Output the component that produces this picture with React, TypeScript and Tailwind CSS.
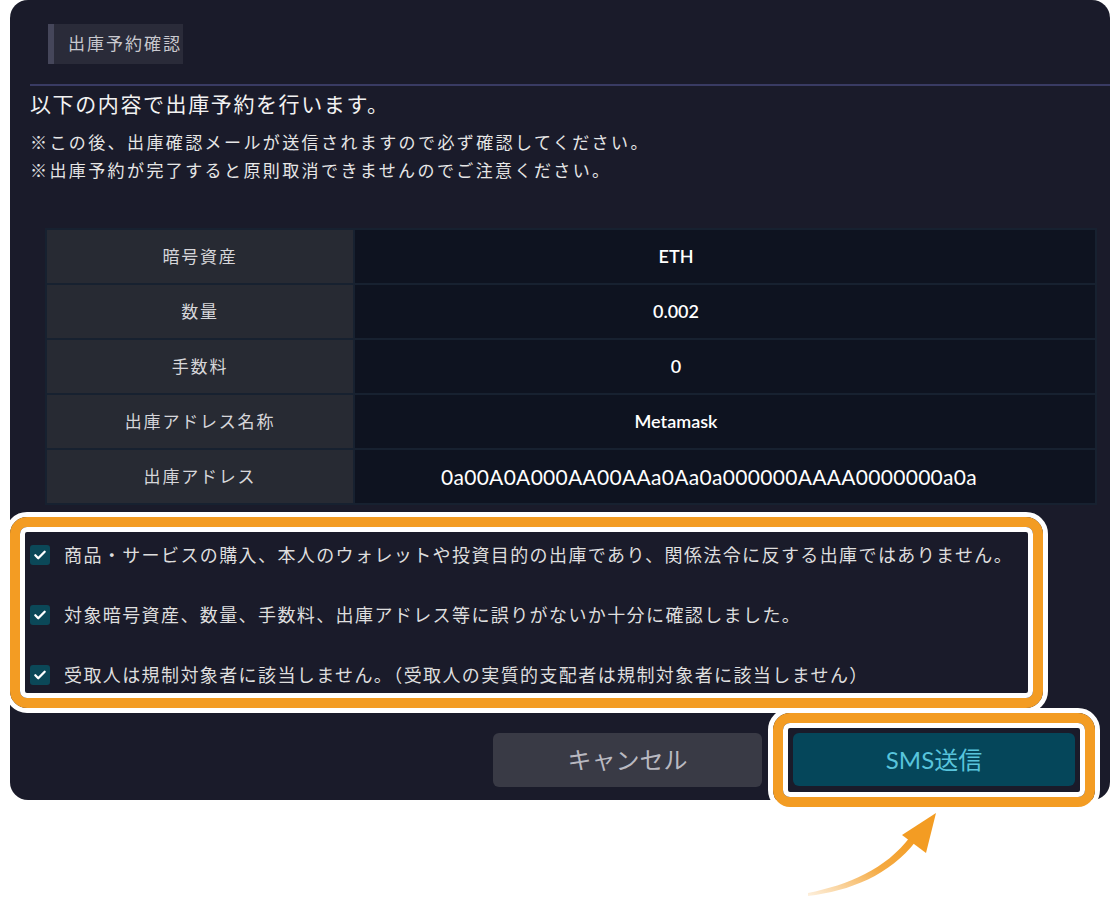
import React from 'react';

const rows = [
  { label: '暗号資産', value: 'ETH', big: false },
  { label: '数量', value: '0.002', big: false },
  { label: '手数料', value: '0', big: false },
  { label: '出庫アドレス名称', value: 'Metamask', big: false },
  { label: '出庫アドレス', value: '0a00A0A000AA00AAa0Aa0a000000AAAA0000000a0a', big: true },
];

const checks = [
  '商品・サービスの購入、本人のウォレットや投資目的の出庫であり、関係法令に反する出庫ではありません。',
  '対象暗号資産、数量、手数料、出庫アドレス等に誤りがないか十分に確認しました。',
  '受取人は規制対象者に該当しません。（受取人の実質的支配者は規制対象者に該当しません）',
];

const CheckBox = () => (
  <span className="flex h-[20px] w-[20px] shrink-0 items-center justify-center rounded-[3px] bg-[#0b4858]">
    <svg width="14" height="14" viewBox="0 0 24 24" fill="none" stroke="#ffffff" strokeWidth="4" strokeLinecap="round" strokeLinejoin="round">
      <path d="M4 12.5l5 5L20 6.5" />
    </svg>
  </span>
);

// orange highlight frame drawn over the screenshot
const Frame: React.FC<{ className: string }> = ({ className }) => (
  <div className={`absolute rounded-[22px] border-[5px] border-white ${className}`}>
    <div className="h-full w-full rounded-[17px] border-[10px] border-[#f39c23]">
      <div className="h-full w-full rounded-[7px] border-[5px] border-white" />
    </div>
  </div>
);

const App: React.FC = () => {
  return (
    <div className="relative h-[897px] w-[1110px] overflow-hidden bg-white font-['Lato','Noto_Sans_CJK_JP',sans-serif]">
      <div className="ml-[10px] h-[800px] w-[1100px] rounded-[18px] bg-[#1a1b2a] pt-[24px]">
        {/* title */}
        <div className="ml-[38px] flex h-[40px] w-fit bg-[#2a2b39]">
          <div className="w-[6px] bg-[#45465a]" />
          <span className="flex items-center pl-[14px] pr-[1px] text-[17px] tracking-[2px] text-[#c9c9cf]">出庫予約確認</span>
        </div>
        <div className="ml-[20px] mt-[20px] h-[2px] bg-[#393b63]" />

        <div className="ml-[20px] mt-[4px] text-[21px] leading-[28px] tracking-[1.6px] text-[#f2f2f2]">以下の内容で出庫予約を行います。</div>
        <div className="ml-[20px] mt-[11px] text-[17px] leading-[28px] tracking-[2.4px] text-[#e6e6e6]">
          <div>※この後、出庫確認メールが送信されますので必ず確認してください。</div>
          <div>※出庫予約が完了すると原則取消できませんのでご注意ください。</div>
        </div>

        {/* table */}
        <div className="ml-[35px] mt-[43px] flex w-[1052px] flex-col gap-[2px] bg-[#172130] p-[2px]">
          {rows.map((r) => (
            <div key={r.label} className="flex h-[53px] gap-[2px]">
              <div className="flex w-[306px] items-center justify-center bg-[#272a33] text-[17px] tracking-[1.8px] text-[#d6d6da]">{r.label}</div>
              <div
                className={`flex flex-1 items-center justify-center bg-[#0e1320] text-white ${
                  r.big ? 'pr-[32px] text-[21px] tracking-[0.3px]' : 'pr-[98px] text-[18px] font-semibold'
                }`}
              >
                {r.value}
              </div>
            </div>
          ))}
        </div>

        {/* confirmations */}
        <div className="ml-[10px] mt-[27px] flex h-[161px] w-[1008px] flex-col gap-[36px] pl-[10px] pt-[11px]">
          {checks.map((c) => (
            <div key={c} className="flex h-[24px] items-center gap-[14px]">
              <CheckBox />
              <span className="text-[18px] tracking-[1.4px] text-[#dedede]">{c}</span>
            </div>
          ))}
        </div>

        {/* buttons */}
        <div className="ml-[483px] mt-[40px] flex gap-[31px]">
          <button className="flex h-[54px] w-[269px] items-center justify-center rounded-[6px] bg-[#393a45] text-[24px] text-[#b9b9c1]">キャンセル</button>
          <button className="flex h-[53px] w-[282px] items-center justify-center rounded-[6px] bg-[#05465a] text-[24px] text-[#58c4dc]">SMS送信</button>
        </div>
      </div>

      <Frame className="left-[5px] top-[512px] h-[201px] w-[1043px]" />
      <Frame className="left-[768px] top-[708px] h-[104px] w-[332px]" />

      {/* arrow */}
      <svg className="absolute left-[790px] top-[805px]" width="160" height="92" viewBox="0 0 160 92">
        <defs>
          <linearGradient id="arr" x1="0" y1="1" x2="1" y2="0">
            <stop offset="0" stopColor="#f39c23" stopOpacity="0.15" />
            <stop offset="0.55" stopColor="#f39c23" stopOpacity="0.85" />
            <stop offset="1" stopColor="#f39c23" />
          </linearGradient>
        </defs>
        <path d="M18 91 C 60 86, 100 70, 126 36 L 120 32 C 96 64, 58 80, 18 88 Z" fill="url(#arr)" />
        <path d="M146 8 L 112 30 L 136 48 Z" fill="#f39c23" />
      </svg>
    </div>
  );
};

export default App;
